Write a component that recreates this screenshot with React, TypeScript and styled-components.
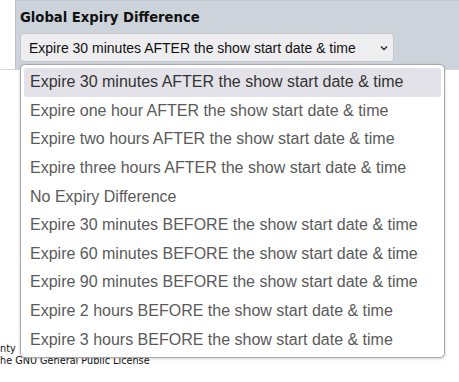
import React from "react";
import styled, { createGlobalStyle } from "styled-components";

const GlobalStyle = createGlobalStyle`
  html, body { margin: 0; padding: 0; background: #ffffff; }
  body { font-family: "DejaVu Sans", Verdana, sans-serif; }
  * { box-sizing: border-box; }
`;

const Page = styled.div`
  position: relative;
  width: 459px;
  height: 382px;
  overflow: hidden;
  background: #ffffff;
`;

const TopBand = styled.div`
  padding-left: 15px;
  border-bottom: 1px solid #d9d9d9;
`;

const Panel = styled.div`
  height: 69px;
  background: #cdd3da;
  border-left: 1px solid #bcc2ca;
  border-top: 1px solid #c3c9d0;
  padding: 9px 0 0 4px;
  display: flex;
  flex-direction: column;
`;

const Heading = styled.div`
  font-family: "DejaVu Sans", Verdana, sans-serif;
  font-weight: bold;
  font-size: 13.2px;
  line-height: 16px;
  color: #111111;
`;

const SelectBox = styled.div`
  margin-top: 7px;
  width: 374px;
  height: 29px;
  background: #eeeef0;
  border: 1px solid #c8c8cc;
  border-radius: 4px;
  display: flex;
  align-items: center;
  justify-content: space-between;
  padding: 0 4px 0 8px;
  font-family: "Liberation Sans", Arial, sans-serif;
  font-size: 14px;
  color: #111111;
`;

const Chevron = styled.svg`
  width: 8px;
  height: 6px;
  margin-right: 1px;
`;

const Footer = styled.div`
  margin-top: 273px;
  font-family: "DejaVu Sans", Verdana, sans-serif;
  font-size: 9.7px;
  line-height: 12px;
  color: #111111;
  white-space: nowrap;
`;

const FooterLine = styled.div<{ $shift: number }>`
  margin-left: ${(p) => p.$shift}px;
`;

const Listbox = styled.div`
  position: absolute;
  left: 20px;
  top: 64px;
  width: 425px;
  height: 294px;
  background: #ffffff;
  border: 1px solid #a9a9ad;
  border-radius: 5px;
  box-shadow: 0 1px 3px rgba(0, 0, 0, 0.18);
  padding: 3px 3px;
  display: flex;
  flex-direction: column;
`;

const Option = styled.div<{ $selected?: boolean }>`
  height: 28.7px;
  display: flex;
  align-items: center;
  padding-left: 6px;
  border-radius: 3px;
  font-family: "Liberation Sans", Arial, sans-serif;
  font-size: 16px;
  color: ${(p) => (p.$selected ? "#333333" : "#5a5a5a")};
  background: ${(p) => (p.$selected ? "#e3e2e8" : "transparent")};
  white-space: nowrap;
`;

const options = [
  "Expire 30 minutes AFTER the show start date & time",
  "Expire one hour AFTER the show start date & time",
  "Expire two hours AFTER the show start date & time",
  "Expire three hours AFTER the show start date & time",
  "No Expiry Difference",
  "Expire 30 minutes BEFORE the show start date & time",
  "Expire 60 minutes BEFORE the show start date & time",
  "Expire 90 minutes BEFORE the show start date & time",
  "Expire 2 hours BEFORE the show start date & time",
  "Expire 3 hours BEFORE the show start date & time",
];

export default function App() {
  return (
    <>
      <GlobalStyle />
      <Page>
        <TopBand>
          <Panel>
            <Heading>Global Expiry Difference</Heading>
            <SelectBox>
              <span>{options[0]}</span>
              <Chevron viewBox="0 0 8 6">
                <path d="M1 1.5 L4 4.5 L7 1.5" fill="none" stroke="#222" strokeWidth="1.3" />
              </Chevron>
            </SelectBox>
          </Panel>
        </TopBand>
        <Footer>
          <FooterLine $shift={0}>nty</FooterLine>
          <FooterLine $shift={0}>he GNU General Public License</FooterLine>
        </Footer>
        <Listbox>
          {options.map((o, i) => (
            <Option key={o} $selected={i === 0}>
              {o}
            </Option>
          ))}
        </Listbox>
      </Page>
    </>
  );
}
